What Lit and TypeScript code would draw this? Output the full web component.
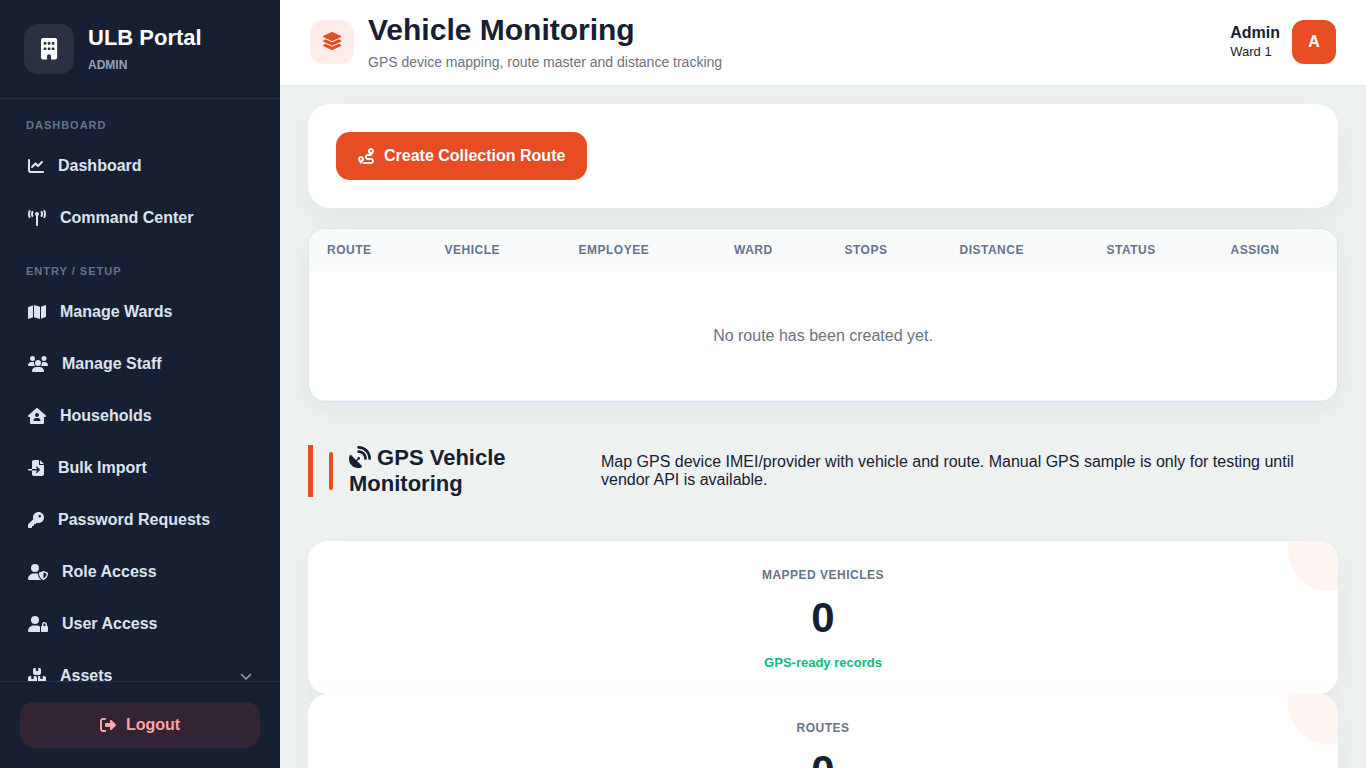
import { LitElement, html, svg, css } from "lit";
import { customElement, property } from "lit/decorators.js";

interface Glyph {
  w: number;
  d: string;
}

const GLYPHS: Record<string, Glyph> = {
  building: { w: 384, d: "M48 0C21.5 0 0 21.5 0 48V464c0 26.5 21.5 48 48 48h96V432c0-26.5 21.5-48 48-48s48 21.5 48 48v80h96c26.5 0 48-21.5 48-48V48c0-26.5-21.5-48-48-48H48zM64 240c0-8.8 7.2-16 16-16h32c8.8 0 16 7.2 16 16v32c0 8.8-7.2 16-16 16H80c-8.8 0-16-7.2-16-16V240zm112-16h32c8.8 0 16 7.2 16 16v32c0 8.8-7.2 16-16 16H176c-8.8 0-16-7.2-16-16V240c0-8.8 7.2-16 16-16zm80 16c0-8.8 7.2-16 16-16h32c8.8 0 16 7.2 16 16v32c0 8.8-7.2 16-16 16H272c-8.8 0-16-7.2-16-16V240zM80 96h32c8.8 0 16 7.2 16 16v32c0 8.8-7.2 16-16 16H80c-8.8 0-16-7.2-16-16V112c0-8.8 7.2-16 16-16zm80 16c0-8.8 7.2-16 16-16h32c8.8 0 16 7.2 16 16v32c0 8.8-7.2 16-16 16H176c-8.8 0-16-7.2-16-16V112zM272 96h32c8.8 0 16 7.2 16 16v32c0 8.8-7.2 16-16 16H272c-8.8 0-16-7.2-16-16V112c0-8.8 7.2-16 16-16z" },
  chart: { w: 512, d: "M64 64c0-17.7-14.3-32-32-32S0 46.3 0 64V400c0 44.2 35.8 80 80 80H480c17.7 0 32-14.3 32-32s-14.3-32-32-32H80c-8.8 0-16-7.2-16-16V64zm406.6 86.6c12.5-12.5 12.5-32.8 0-45.3s-32.8-12.5-45.3 0L320 210.7l-57.4-57.4c-12.5-12.5-32.8-12.5-45.3 0l-112 112c-12.5 12.5-12.5 32.8 0 45.3s32.8 12.5 45.3 0L240 221.3l57.4 57.4c12.5 12.5 32.8 12.5 45.3 0l128-128z" },
  tower: { w: 576, d: "M80.3 44C69.8 69.9 64 98.2 64 128s5.8 58.1 16.3 84c6.6 16.4-1.3 35-17.7 41.7s-35-1.3-41.7-17.7C7.4 202.6 0 166.1 0 128S7.4 53.4 20.9 20C27.6 3.6 46.2-4.3 62.6 2.3S86.9 27.6 80.3 44zM555.1 20C568.6 53.4 576 89.9 576 128s-7.4 74.6-20.9 108c-6.6 16.4-25.3 24.3-41.7 17.7S489.1 228.4 495.7 212c10.5-25.9 16.3-54.2 16.3-84s-5.8-58.1-16.3-84C489.1 27.6 497 9 513.4 2.3s35 1.3 41.7 17.7zM352 128c0 23.7-12.9 44.4-32 55.4V480c0 17.7-14.3 32-32 32s-32-14.3-32-32V183.4c-19.1-11.1-32-31.7-32-55.4c0-35.3 28.7-64 64-64s64 28.7 64 64zM170.6 76.8C163.8 92.4 160 109.7 160 128s3.8 35.6 10.6 51.2c7.1 16.2-.3 35.1-16.5 42.1s-35.1-.3-42.1-16.5c-10.3-23.6-16-49.6-16-76.8s5.7-53.2 16-76.8c7.1-16.2 25.9-23.6 42.1-16.5s23.6 25.9 16.5 42.1zM464 51.2c10.3 23.6 16 49.6 16 76.8s-5.7 53.2-16 76.8c-7.1 16.2-25.9 23.6-42.1 16.5s-23.6-25.9-16.5-42.1c6.8-15.6 10.6-32.9 10.6-51.2s-3.8-35.6-10.6-51.2c-7.1-16.2 .3-35.1 16.5-42.1s35.1 .3 42.1 16.5z" },
  map: { w: 576, d: "M384 476.1L192 421.2V35.9L384 90.8V476.1zm32-1.2V88.4L543.1 37.5c15.8-6.3 32.9 5.3 32.9 22.3V394.6c0 9.8-6 18.6-15.1 22.3L416 474.8zM15.1 95.1L160 37.2V423.6L32.9 474.5C17.1 480.8 0 469.2 0 452.2V117.4c0-9.8 6-18.6 15.1-22.3z" },
  users: { w: 640, d: "M144 0a80 80 0 1 1 0 160A80 80 0 1 1 144 0zM512 0a80 80 0 1 1 0 160A80 80 0 1 1 512 0zM0 298.7C0 239.8 47.8 192 106.7 192h42.7c15.9 0 31 3.5 44.6 9.7c-1.3 7.2-1.9 14.7-1.9 22.3c0 38.2 16.8 72.5 43.3 96c-.2 0-.4 0-.7 0H21.3C9.6 320 0 310.4 0 298.7zM405.3 320c-.2 0-.4 0-.7 0c26.6-23.5 43.3-57.8 43.3-96c0-7.6-.7-15-1.9-22.3c13.6-6.3 28.7-9.7 44.6-9.7h42.7C592.2 192 640 239.8 640 298.7c0 11.8-9.6 21.3-21.3 21.3H405.3zM224 224a96 96 0 1 1 192 0 96 96 0 1 1-192 0zM128 485.3C128 411.7 187.7 352 261.3 352H378.7C452.3 352 512 411.7 512 485.3c0 14.7-11.9 26.7-26.7 26.7H154.7c-14.7 0-26.7-11.9-26.7-26.7z" },
  house: { w: 576, d: "M575.8 255.5c0 18-15 32.1-32 32.1h-32l.7 160.2c0 2.7-.2 5.4-.5 8.1V472c0 22.1-17.9 40-40 40H104c-22.1 0-40-17.9-40-40V287.6H32c-18 0-32-14-32-32.1c0-9 3-17 10-24L266.4 8c7-7 15-8 22-8s15 2 21 7L564.8 231.5c8 7 12 15 11 24zM352 224a64 64 0 1 0-128 0 64 64 0 1 0 128 0zm-96 96c-44.2 0-80 35.8-80 80c0 8.8 7.2 16 16 16H384c8.8 0 16-7.2 16-16c0-44.2-35.8-80-80-80H256z" },
  import: { w: 512, d: "M128 64c0-35.3 28.7-64 64-64H352V128c0 17.7 14.3 32 32 32H512V448c0 35.3-28.7 64-64 64H192c-35.3 0-64-28.7-64-64V336H302.1l-39 39c-9.4 9.4-9.4 24.6 0 33.9s24.6 9.4 33.9 0l80-80c9.4-9.4 9.4-24.6 0-33.9l-80-80c-9.4-9.4-24.6-9.4-33.9 0s-9.4 24.6 0 33.9l39 39H128V64zm0 224v48H24c-13.3 0-24-10.7-24-24s10.7-24 24-24H128zM512 128H384V0L512 128z" },
  key: { w: 512, d: "M336 352c97.2 0 176-78.8 176-176S433.2 0 336 0S160 78.8 160 176c0 18.7 2.9 36.8 8.3 53.7L7 391c-4.5 4.5-7 10.6-7 17v80c0 13.3 10.7 24 24 24h80c13.3 0 24-10.7 24-24V448h40c13.3 0 24-10.7 24-24V384h40c6.4 0 12.5-2.5 17-7l33.3-33.3c16.9 5.4 35 8.3 53.7 8.3zM376 96a40 40 0 1 1 0 80 40 40 0 1 1 0-80z" },
  shield: { w: 640, d: "M224 256A128 128 0 1 0 224 0a128 128 0 1 0 0 256zm-45.7 48C79.8 304 0 383.8 0 482.3C0 498.7 13.3 512 29.7 512H418.3c1.8 0 3.5-.2 5.3-.5c-76.3-55.1-99.8-141-103.1-200.2c-16.1-4.8-33.1-7.3-50.7-7.3H178.3zm308.8-78.3l-120 48C358 277.4 352 286.2 352 296c0 63.3 25.9 168.8 134.8 214.2c5.9 2.5 12.6 2.5 18.5 0C614.1 464.8 640 359.3 640 296c0-9.8-6-18.6-15.1-22.3l-120-48c-5.7-2.3-12.1-2.3-17.8 0zM591.4 312c-3.9 50.7-27.2 116.7-95.4 149.7V273.8L591.4 312z" },
  lock: { w: 640, d: "M224 256A128 128 0 1 0 224 0a128 128 0 1 0 0 256zm-45.7 48C79.8 304 0 383.8 0 482.3C0 498.7 13.3 512 29.7 512H392.6c-5.4-9.4-8.6-20.3-8.6-32V352c0-2.1 .1-4.2 .3-6.3c-31-26-71-41.7-114.6-41.7H178.3zM528 240c17.7 0 32 14.3 32 32v48H496V272c0-17.7 14.3-32 32-32zm-80 32v48c-17.7 0-32 14.3-32 32V480c0 17.7 14.3 32 32 32H608c17.7 0 32-14.3 32-32V352c0-17.7-14.3-32-32-32V272c0-44.2-35.8-80-80-80s-80 35.8-80 80z" },
  boxes: { w: 576, d: "M248 0H208c-26.5 0-48 21.5-48 48V160c0 35.3 28.7 64 64 64H352c35.3 0 64-28.7 64-64V48c0-26.5-21.5-48-48-48H328V80c0 8.8-7.2 16-16 16H264c-8.8 0-16-7.2-16-16V0zM64 256c-35.3 0-64 28.7-64 64V448c0 35.3 28.7 64 64 64H224c35.3 0 64-28.7 64-64V320c0-35.3-28.7-64-64-64H184v80c0 8.8-7.2 16-16 16H120c-8.8 0-16-7.2-16-16V256H64zM352 512H512c35.3 0 64-28.7 64-64V320c0-35.3-28.7-64-64-64H472v80c0 8.8-7.2 16-16 16H408c-8.8 0-16-7.2-16-16V256H352c-15 0-28.8 5.1-39.7 13.8c4.9 10.4 7.7 22 7.7 34.2V464c0 12.2-2.8 23.8-7.7 34.2C323.2 506.9 337 512 352 512z" },
  chevron: { w: 512, d: "M233.4 406.6c12.5 12.5 32.8 12.5 45.3 0l192-192c12.5-12.5 12.5-32.8 0-45.3s-32.8-12.5-45.3 0L256 338.7 86.6 169.4c-12.5-12.5-32.8-12.5-45.3 0s-12.5 32.8 0 45.3l192 192z" },
  logout: { w: 512, d: "M377.9 105.9L500.7 228.7c7.2 7.2 11.3 17.1 11.3 27.3s-4.1 20.1-11.3 27.3L377.9 406.1c-6.4 6.4-15 9.9-24 9.9c-18.7 0-33.9-15.2-33.9-33.9l0-62.1-128 0c-17.7 0-32-14.3-32-32l0-64c0-17.7 14.3-32 32-32l128 0 0-62.1c0-18.7 15.2-33.9 33.9-33.9c9 0 17.6 3.6 24 9.9zM160 96L96 96c-17.7 0-32 14.3-32 32l0 256c0 17.7 14.3 32 32 32l64 0c17.7 0 32 14.3 32 32s-14.3 32-32 32l-64 0c-53 0-96-43-96-96L0 128C0 75 43 32 96 32l64 0c17.7 0 32 14.3 32 32s-14.3 32-32 32z" },
  layers: { w: 576, d: "M264.5 5.2c14.9-6.9 32.1-6.9 47 0l218.6 101c8.5 3.9 13.9 12.4 13.9 21.8s-5.4 17.9-13.9 21.8l-218.6 101c-14.9 6.9-32.1 6.9-47 0L45.9 149.8C37.4 145.8 32 137.3 32 128s5.4-17.9 13.9-21.8L264.5 5.2zM476.9 209.6l53.2 24.6c8.5 3.9 13.9 12.4 13.9 21.8s-5.4 17.9-13.9 21.8l-218.6 101c-14.9 6.9-32.1 6.9-47 0L45.9 277.8C37.4 273.8 32 265.3 32 256s5.4-17.9 13.9-21.8l53.2-24.6 152 70.2c23.4 10.8 50.4 10.8 73.8 0l152-70.2zm-152 198.2l152-70.2 53.2 24.6c8.5 3.9 13.9 12.4 13.9 21.8s-5.4 17.9-13.9 21.8l-218.6 101c-14.9 6.9-32.1 6.9-47 0L45.9 405.8C37.4 401.8 32 393.3 32 384s5.4-17.9 13.9-21.8l53.2-24.6 152 70.2c23.4 10.8 50.4 10.8 73.8 0z" },
  route: { w: 512, d: "M512 96c0 50.2-59.1 125.1-84.6 155c-3.8 4.4-9.4 6.1-14.5 5H320c-17.7 0-32 14.3-32 32s14.3 32 32 32h96c53 0 96 43 96 96s-43 96-96 96H139.6c8.7-9.9 19.3-22.6 30-36.8c6.3-8.4 12.8-17.6 19-27.2H416c17.7 0 32-14.3 32-32s-14.3-32-32-32H320c-53 0-96-43-96-96s43-96 96-96h39.8c-21-31.5-39.8-67.7-39.8-96c0-53 43-96 96-96s96 43 96 96zM117.1 489.1c-3.8 4.3-7.2 8.1-10.1 11.3l-1.8 2-.2-.2c-6 4.6-14.6 4-20-1.8C59.8 473 0 402.5 0 352c0-53 43-96 96-96s96 43 96 96c0 30-21.1 67-43.5 97.9c-10.7 14.7-21.7 28-30.8 38.5l-.6 .7zM128 352a32 32 0 1 0-64 0 32 32 0 1 0 64 0zM416 128a32 32 0 1 0 0-64 32 32 0 1 0 0 64z" },
  dish: { w: 512, d: "M192 32c0-17.7 14.3-32 32-32C383.1 0 512 128.9 512 288c0 17.7-14.3 32-32 32s-32-14.3-32-32C448 164.3 347.7 64 224 64c-17.7 0-32-14.3-32-32zM60.6 220.6L164.7 324.7l28.4-28.4c-.7-2.6-1.1-5.4-1.1-8.3c0-17.7 14.3-32 32-32s32 14.3 32 32s-14.3 32-32 32c-2.9 0-5.6-.4-8.3-1.1l-28.4 28.4L291.4 451.4c14.5 14.5 11.8 38.8-7.3 46.3C260.5 506.9 234.9 512 208 512C93.1 512 0 418.9 0 304c0-26.9 5.1-52.5 14.4-76.1c7.5-19 31.8-21.8 46.3-7.3zM224 96c106 0 192 86 192 192c0 17.7-14.3 32-32 32s-32-14.3-32-32c0-70.7-57.3-128-128-128c-17.7 0-32-14.3-32-32s14.3-32 32-32z" },
};

/** Solid glyph, 1em tall, coloured by its surroundings. */
@customElement("ui-icon")
class UiIcon extends LitElement {
  @property() name = "";

  static styles = css`
    :host {
      display: inline-block;
      line-height: 0;
    }
    .glyph {
      display: block;
      height: 1em;
      fill: currentColor;
      overflow: visible;
    }
  `;

  render() {
    const g = GLYPHS[this.name];
    return html`<svg class="glyph" viewBox="0 0 ${g.w} 512" aria-hidden="true">
      ${svg`<path d=${g.d}></path>`}
    </svg>`;
  }
}

interface NavItem {
  icon: string;
  label: string;
  expandable?: boolean;
}

const NAV: { title: string; items: NavItem[] }[] = [
  {
    title: "Dashboard",
    items: [
      { icon: "chart", label: "Dashboard" },
      { icon: "tower", label: "Command Center" },
    ],
  },
  {
    title: "Entry / Setup",
    items: [
      { icon: "map", label: "Manage Wards" },
      { icon: "users", label: "Manage Staff" },
      { icon: "house", label: "Households" },
      { icon: "import", label: "Bulk Import" },
      { icon: "key", label: "Password Requests" },
      { icon: "shield", label: "Role Access" },
      { icon: "lock", label: "User Access" },
      { icon: "boxes", label: "Assets", expandable: true },
    ],
  },
];

@customElement("side-bar")
class SideBar extends LitElement {
  static styles = css`
    :host {
      display: flex;
      flex-direction: column;
      width: 280px;
      height: 100vh;
      background: #172033;
      color: #fff;
    }
    .brand {
      flex: none;
      display: flex;
      align-items: center;
      gap: 14px;
      padding: 24px;
      border-bottom: 1px solid rgba(255, 255, 255, 0.08);
    }
    .mark {
      display: grid;
      place-items: center;
      width: 50px;
      height: 50px;
      border-radius: 14px;
      background: rgba(255, 255, 255, 0.08);
      font-size: 21.5px;
    }
    .name {
      font-size: 22px;
      font-weight: 700;
      line-height: 25px;
    }
    .role {
      margin: 8px 0 2px;
      font-size: 12px;
      font-weight: 700;
      line-height: 14px;
      color: #94a3b8;
    }
    .nav {
      flex: 1;
      min-height: 0;
      overflow: hidden;
      padding: 20px 14px 0;
    }
    .group {
      margin-bottom: 23px;
    }
    .heading {
      padding-left: 12px;
      margin-bottom: 11px;
      font-size: 11px;
      font-weight: 700;
      line-height: 12px;
      letter-spacing: 1px;
      text-transform: uppercase;
      color: #64748b;
    }
    .item {
      display: flex;
      align-items: center;
      gap: 14px;
      height: 48px;
      margin-bottom: 4px;
      padding: 0 14px;
      font-size: 16px;
      font-weight: 700;
      color: #dbe4ef;
    }
    .chevron {
      margin-left: auto;
      font-size: 12px;
      color: #94a3b8;
    }
    .foot {
      flex: none;
      padding: 20px;
      border-top: 1px solid rgba(255, 255, 255, 0.08);
    }
    .logout {
      display: flex;
      align-items: center;
      justify-content: center;
      gap: 10px;
      height: 46px;
      border-radius: 14px;
      background: rgba(239, 68, 68, 0.13);
      color: #fca5a5;
      font-size: 16px;
      font-weight: 700;
    }
  `;

  render() {
    return html`
      <div class="brand">
        <div class="mark"><ui-icon name="building"></ui-icon></div>
        <div>
          <div class="name">ULB Portal</div>
          <div class="role">ADMIN</div>
        </div>
      </div>
      <nav class="nav">
        ${NAV.map(
          (g) => html`<div class="group">
            <div class="heading">${g.title}</div>
            ${g.items.map(
              (i) => html`<div class="item">
                <ui-icon name=${i.icon}></ui-icon><span>${i.label}</span>
                ${i.expandable ? html`<ui-icon class="chevron" name="chevron"></ui-icon>` : ""}
              </div>`
            )}
          </div>`
        )}
      </nav>
      <div class="foot">
        <div class="logout"><ui-icon name="logout"></ui-icon><span>Logout</span></div>
      </div>
    `;
  }
}

@customElement("stat-card")
class StatCard extends LitElement {
  @property() label = "";
  @property() value = "";
  @property() note = "";

  static styles = css`
    :host {
      display: block;
      position: relative;
      overflow: hidden;
      height: 153px;
      box-sizing: border-box;
      padding: 27px 24px 0;
      border-radius: 20px;
      background: #fff;
      box-shadow: 0 10px 30px rgba(15, 23, 42, 0.05);
      text-align: center;
    }
    .blob {
      position: absolute;
      top: -30px;
      right: -30px;
      width: 80px;
      height: 80px;
      border-radius: 50%;
      background: #fef5f3;
    }
    .label {
      font-size: 12px;
      font-weight: 700;
      line-height: 14px;
      letter-spacing: 0.5px;
      text-transform: uppercase;
      color: #64748b;
    }
    .value {
      margin-top: 12px;
      font-size: 42px;
      font-weight: 700;
      line-height: 48px;
      color: #172033;
    }
    .note {
      margin-top: 13px;
      font-size: 13px;
      font-weight: 700;
      line-height: 15px;
      color: #10b981;
    }
  `;

  render() {
    return html`
      <div class="blob"></div>
      <div class="label">${this.label}</div>
      <div class="value">${this.value}</div>
      <div class="note">${this.note}</div>
    `;
  }
}

const COLUMNS = ["Route", "Vehicle", "Employee", "Ward", "Stops", "Distance", "Status", "Assign"];

@customElement("app-root")
class AppRoot extends LitElement {
  static styles = css`
    :host {
      display: grid;
      grid-template-columns: 280px minmax(0, 1fr);
      grid-template-rows: 100vh;
      height: 100vh;
      overflow: hidden;
      background: #edf2f1;
      color: #172033;
      font-family: "Liberation Sans", Arial, sans-serif;
      font-size: 16px;
    }
    .main {
      display: flex;
      flex-direction: column;
      min-height: 0;
      height: 100vh;
    }
    .topbar {
      flex: none;
      display: flex;
      align-items: flex-start;
      justify-content: space-between;
      box-sizing: border-box;
      height: 86px;
      padding: 0 30px;
      background: #fff;
      border-bottom: 1px solid #dde5ee;
    }
    .lead,
    .user {
      display: flex;
      gap: 14px;
    }
    .badge {
      display: grid;
      place-items: center;
      box-sizing: border-box;
      width: 44px;
      height: 44px;
      margin-top: 20px;
      padding-bottom: 2px;
      border-radius: 14px;
      background: #fdece7;
      color: #e84c22;
      font-size: 18px;
    }
    .title {
      margin: 13px 0 0;
      font-size: 30px;
      font-weight: 700;
      line-height: 34px;
    }
    .subtitle {
      margin-top: 7px;
      font-size: 14px;
      line-height: 16px;
      color: #6b7280;
    }
    .user {
      gap: 12px;
      padding-top: 20px;
    }
    .who {
      padding-top: 4px;
      line-height: 18px;
    }
    .who-name {
      font-weight: 700;
    }
    .who-ward {
      padding-top: 1px;
      font-size: 13px;
      line-height: 18px;
    }
    .avatar {
      display: grid;
      place-items: center;
      width: 44px;
      height: 44px;
      border-radius: 12px;
      background: #e84c22;
      color: #fff;
      font-weight: 700;
    }
    .content {
      flex: 1;
      min-height: 0;
      overflow: hidden;
      padding: 18px 28px 0;
    }
    .actions {
      display: flex;
      padding: 28px;
      border-radius: 22px;
      background: #fff;
      box-shadow: 0 10px 30px rgba(15, 23, 42, 0.05);
    }
    .create {
      display: flex;
      align-items: center;
      gap: 10px;
      height: 48px;
      padding: 0 22px;
      border-radius: 14px;
      background: #e84c22;
      color: #fff;
      font-weight: 700;
    }
    .table {
      margin-top: 20px;
      box-sizing: border-box;
      height: 174px;
      border: 1px solid #dce6ee;
      border-radius: 18px;
      overflow: hidden;
      background: #fff;
      box-shadow: 0 8px 24px rgba(15, 23, 42, 0.05);
    }
    .thead {
      display: grid;
      grid-template-columns: 117.5px 134px 155.5px 110.5px 115px 147px 124px 1fr;
      height: 42px;
      align-items: center;
      background: #f8fafc;
    }
    .th {
      padding-left: 18px;
      font-size: 12px;
      font-weight: 700;
      line-height: 14px;
      letter-spacing: 0.5px;
      text-transform: uppercase;
      color: #64748b;
    }
    .empty {
      display: grid;
      place-items: center;
      box-sizing: border-box;
      height: 130px;
      border-bottom: 1px solid #edf2f7;
      color: #6b7280;
    }
    .section {
      display: flex;
      align-items: center;
      margin: 43px 0 44px;
      height: 52px;
      border-left: 5px solid #e84c22;
      padding-left: 16px;
    }
    .bar {
      width: 4px;
      height: 38px;
      border-radius: 2px;
      background: #e84c22;
    }
    .section-title {
      width: 236px;
      margin: 0 0 0 16px;
      padding-right: 16px;
      box-sizing: border-box;
      font-size: 22px;
      font-weight: 700;
      line-height: 26px;
    }
    .section-title ui-icon {
      vertical-align: -2.75px;
    }
    .line {
      display: block;
    }
    .section-text {
      flex: 1;
      margin: 0 0 0 16px;
      line-height: 18px;
    }
  `;

  render() {
    return html`
      <side-bar></side-bar>
      <div class="main">
        <header class="topbar">
          <div class="lead">
            <div class="badge"><ui-icon name="layers"></ui-icon></div>
            <div>
              <h1 class="title">Vehicle Monitoring</h1>
              <div class="subtitle">GPS device mapping, route master and distance tracking</div>
            </div>
          </div>
          <div class="user">
            <div class="who">
              <div class="who-name">Admin</div>
              <div class="who-ward">Ward 1</div>
            </div>
            <div class="avatar">A</div>
          </div>
        </header>
        <main class="content">
          <div class="actions">
            <div class="create"><ui-icon name="route"></ui-icon><span>Create Collection Route</span></div>
          </div>
          <div class="table">
            <div class="thead">${COLUMNS.map((c) => html`<div class="th">${c}</div>`)}</div>
            <div class="empty">No route has been created yet.</div>
          </div>
          <section class="section">
            <div class="bar"></div>
            <h2 class="section-title">
              <span class="line"><ui-icon name="dish"></ui-icon> GPS Vehicle</span>
              <span class="line">Monitoring</span>
            </h2>
            <p class="section-text">
              Map GPS device IMEI/provider with vehicle and route. Manual GPS sample is only for testing until
              vendor API is available.
            </p>
          </section>
          <stat-card label="Mapped Vehicles" value="0" note="GPS-ready records"></stat-card>
          <stat-card label="Routes" value="0" note="Active routes"></stat-card>
        </main>
      </div>
    `;
  }
}
